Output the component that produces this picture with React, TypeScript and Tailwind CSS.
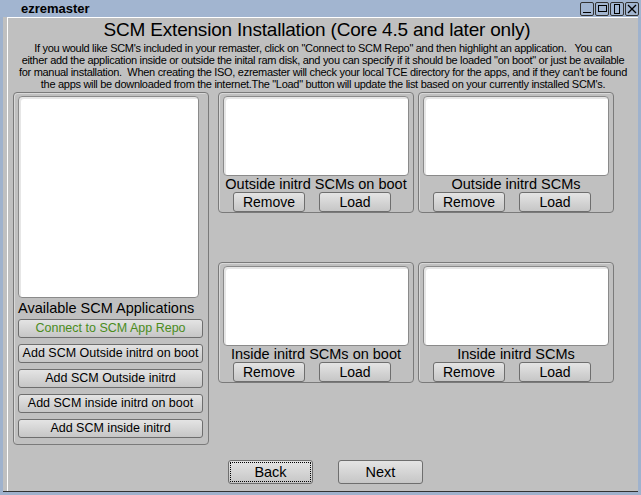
import React from "react";

const font = { fontFamily: '"Liberation Sans", Arial, Helvetica, sans-serif' };

function Btn({ children, className = "", green = false }: { children: React.ReactNode; className?: string; green?: boolean }) {
  return (
    <div
      className={`flex items-center justify-center rounded-[3px] border border-[#6e6e6e] bg-gradient-to-b from-[#e4e4e4] to-[#c6c6c6] leading-none whitespace-nowrap ${green ? "text-[#4a8c1c]" : "text-black"} ${className}`}
    >
      {children}
    </div>
  );
}

function ListBox({ className = "" }: { className?: string }) {
  return (
    <div className={`rounded-[4px] border border-[#8a8a8a] bg-white shadow-[inset_2px_2px_0_#e6e6e6] ${className}`} />
  );
}

function Group({ children, className = "" }: { children: React.ReactNode; className?: string }) {
  return (
    <div className={`rounded-[4px] border border-[#7a7a7a] shadow-[inset_1px_1px_0_#d8d8d8] ${className}`}>{children}</div>
  );
}

function SmallPanel({ label }: { label: string }) {
  return (
    <Group className="flex h-[121px] w-[196px] flex-col px-[4px] pt-[3px]">
      <ListBox className="h-[81px] w-full" />
      <div className="mt-[1px] h-[14px] text-center text-[14.5px] leading-[14px] text-black whitespace-nowrap">{label}</div>
      <div className="mt-[1px] flex pl-[10px]">
        <Btn className="h-[20px] w-[72px] text-[14px]">Remove</Btn>
        <Btn className="ml-[14px] h-[20px] w-[72px] text-[14px]">Load</Btn>
      </div>
    </Group>
  );
}

export default function App() {
  return (
    <div style={font} className="relative flex h-[495px] w-[641px] flex-col overflow-hidden bg-[#9fb2cd]">
      {/* title bar */}
      <div className="flex h-[17px] shrink-0 items-center justify-between bg-[#a2b5d0]">
        <span className="ml-[21px] text-[13px] font-bold leading-none text-black">ezremaster</span>
        <div className="mr-[2px] flex gap-[1px]">
          {[0, 1, 2, 3].map((i) => (
            <div
              key={i}
              className="flex h-[14px] w-[14px] items-center justify-center rounded-[2px] border border-[#333] text-[11px] leading-none text-black"
            >
              {i === 0 ? (
                <div className="mt-[8px] h-[1px] w-[8px] bg-black" />
              ) : i === 1 ? (
                <div className="h-[7px] w-[9px] border border-black" />
              ) : i === 2 ? (
                <div className="h-[10px] w-[6px] border border-black" />
              ) : (
                <svg width="10" height="10" viewBox="0 0 10 10">
                  <path d="M1 1L9 9M9 1L1 9" stroke="black" strokeWidth="1.3" />
                </svg>
              )}
            </div>
          ))}
        </div>
      </div>
      {/* body */}
      <div className="mx-[3px] mb-[3px] flex flex-1 flex-col border-b border-[#333] bg-[#c0c0c0]">
        <div className="ml-[4px] flex flex-1 flex-col border-l border-t border-white">
          <div className="mt-[2px] pr-[12px] text-center text-[19px] leading-[20px] tracking-[-0.2px] text-black whitespace-nowrap">
            SCM Extension Installation (Core 4.5 and later only)
          </div>
          <div className="mt-[2px] text-center text-[11px] leading-[12px] tracking-[-0.3px] text-black whitespace-nowrap">
            <div>If you would like SCM's included in your remaster, click on "Connect to SCM Repo" and then highlight an application.&nbsp;&nbsp; You can</div>
            <div>either add the application inside or outside the inital ram disk, and you can specify if it should be loaded "on boot" or just be available</div>
            <div>for manual installation.&nbsp; When creating the ISO, ezremaster will check your local TCE directory for the apps, and if they can't be found</div>
            <div>the apps will be downloaded from the internet.The "Load" button will update the list based on your currently installed SCM's.</div>
          </div>
          <div className="mt-[2px] flex pl-[5px]">
            {/* left panel */}
            <Group className="flex h-[353px] w-[196px] flex-col px-[4px] pt-[3px]">
              <ListBox className="h-[202px] w-[181px]" />
              <div className="mt-[2px] h-[16px] text-[14.5px] leading-[16px] text-black whitespace-nowrap">Available SCM Applications</div>
              <div className="mt-[3px] flex flex-col gap-[6px]">
                <Btn green className="h-[19px] w-[185px] text-[12.5px]">Connect to SCM App Repo</Btn>
                <Btn className="h-[19px] w-[185px] text-[12.5px]">Add SCM Outside initrd on boot</Btn>
                <Btn className="h-[19px] w-[185px] text-[12.5px]">Add SCM Outside initrd</Btn>
                <Btn className="h-[19px] w-[185px] text-[12.5px]">Add SCM inside initrd on boot</Btn>
                <Btn className="h-[19px] w-[185px] text-[12.5px]">Add SCM inside initrd</Btn>
              </div>
            </Group>
            {/* right panels */}
            <div className="ml-[9px] grid grid-cols-[196px_196px] content-start gap-x-[4px] gap-y-[49px]">
              <SmallPanel label="Outside initrd SCMs on boot" />
              <SmallPanel label="Outside initrd SCMs" />
              <SmallPanel label="Inside initrd SCMs on boot" />
              <SmallPanel label="Inside initrd SCMs" />
            </div>
          </div>
          <div className="mt-[15px] flex pl-[220px]">
            <Btn className="h-[24px] w-[85px] text-[14.5px] outline-1 outline-dotted outline-black -outline-offset-[3px]">Back</Btn>
            <Btn className="ml-[25px] h-[24px] w-[85px] text-[14.5px]">Next</Btn>
          </div>
        </div>
      </div>
    </div>
  );
}
